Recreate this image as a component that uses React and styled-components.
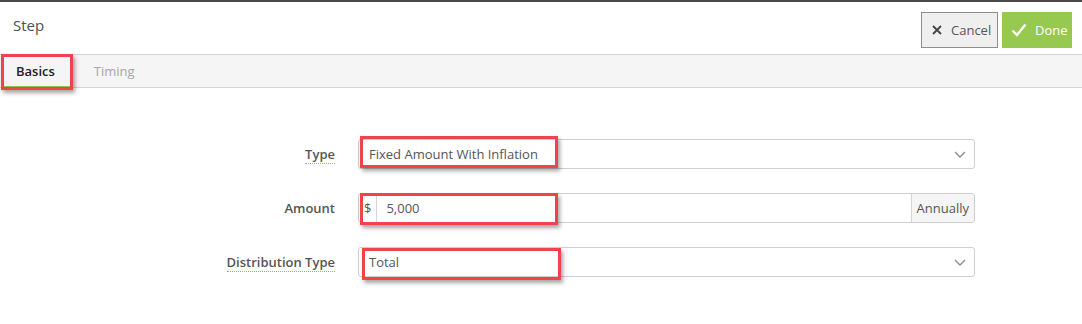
import React from "react";
import styled, { createGlobalStyle } from "styled-components";

const GlobalStyle = createGlobalStyle`
  body {
    margin: 0;
    background: #ffffff;
    font-family: "Open Sans", "Liberation Sans", sans-serif;
    color: #555;
  }
`;

const Page = styled.div`
  width: 1082px;
  height: 324px;
  border-top: 2px solid #4a4a4a;
  box-sizing: border-box;
  background: #fff;
`;

const Header = styled.div`
  height: 52px;
  display: flex;
  align-items: center;
  justify-content: space-between;
  padding: 0 10px 0 13px;
`;

const Title = styled.div`
  font-size: 15px;
  color: #4f4f4f;
  margin-top: -6px;
`;

const Actions = styled.div`
  display: flex;
  gap: 4px;
  margin-top: 4px;
`;

const Button = styled.button`
  height: 36px;
  display: flex;
  align-items: center;
  gap: ${(p) => (p.$primary ? 8 : 9)}px;
  font-family: inherit;
  font-size: 13px;
  padding: 0 0 0 ${(p) => (p.$primary ? 8 : 10)}px;
  box-sizing: border-box;
  cursor: pointer;
  border: 1px solid ${(p) => (p.$primary ? "#97c84f" : "#8e8e8e")};
  background: ${(p) => (p.$primary ? "#97c84f" : "#efefef")};
  color: ${(p) => (p.$primary ? "#fff" : "#555")};
  width: ${(p) => p.$w}px;
`;

const TabBar = styled.div`
  height: 32px;
  border-top: 1px solid #d4d4d4;
  border-bottom: 1px solid #d4d4d4;
  background: #f5f5f5;
  display: flex;
  gap: 8px;
  padding-left: 3px;
`;

const Tab = styled.div`
  position: relative;
  display: flex;
  align-items: center;
  padding: 0 18px 0 13px;
  font-size: 13px;
  font-weight: ${(p) => (p.$active ? 600 : 400)};
  color: ${(p) => (p.$active ? "#222" : "#a6a6a6")};
  border-bottom: 2px solid ${(p) => (p.$active ? "#8cc152" : "transparent")};
  margin-bottom: -1px;
`;

const Highlight = styled.div`
  position: absolute;
  border: 3px solid #f0444b;
  box-shadow: 2px 3px 4px rgba(0, 0, 0, 0.35);
  pointer-events: none;
  top: ${(p) => p.$t}px;
  left: ${(p) => p.$l}px;
  width: ${(p) => p.$w}px;
  height: ${(p) => p.$h}px;
  box-sizing: border-box;
`;

const Form = styled.div`
  display: flex;
  flex-direction: column;
  gap: 24px;
  padding-top: 51px;
`;

const Row = styled.div`
  display: grid;
  grid-template-columns: 335px 617px;
  column-gap: 23px;
  align-items: center;
  height: 30px;
`;

const Label = styled.div`
  justify-self: end;
  font-size: 13px;
  font-weight: 600;
  color: #555;
  line-height: 17px;
  border-bottom: 1px dotted ${(p) => (p.$hint ? "#8cc152" : "transparent")};
  margin-top: 2px;
`;

const Field = styled.div`
  position: relative;
  height: 30px;
  display: flex;
  border: 1px solid #cfcfcf;
  border-radius: 3px;
  box-sizing: border-box;
  background: #fff;
`;

const Value = styled.div`
  flex: 1;
  display: flex;
  align-items: center;
  padding: 0 ${(p) => p.$pl ?? 10}px;
  font-size: 13px;
  color: #555;
`;

const Addon = styled.div`
  display: flex;
  align-items: center;
  padding: 0 5px;
  font-size: 13px;
  color: #555;
  background: ${(p) => (p.$shaded ? "#f5f5f5" : "#fff")};
  border-left: ${(p) => (p.$side === "right" ? "1px solid #d4d4d4" : "none")};
  border-right: ${(p) => (p.$side === "left" ? "1px solid #d4d4d4" : "none")};
  border-radius: ${(p) => (p.$side === "right" ? "0 3px 3px 0" : "3px 0 0 3px")};
`;

const Caret = styled.div`
  display: flex;
  align-items: center;
  padding-right: 8px;
`;

const CloseIcon = () => (
  <svg width="10" height="10" viewBox="0 0 10 10">
    <path d="M1 1L9 9M9 1L1 9" stroke="#444" strokeWidth="1.8" fill="none" />
  </svg>
);

const CheckIcon = () => (
  <svg width="16" height="14" viewBox="0 0 16 14">
    <path
      d="M1.5 7.5L6 12L14.5 1.5"
      stroke="#fff"
      strokeWidth="2.4"
      fill="none"
    />
  </svg>
);

const ChevronIcon = () => (
  <svg width="12" height="7" viewBox="0 0 12 7">
    <path d="M1 1L6 6L11 1" stroke="#8a8a8a" strokeWidth="1.3" fill="none" />
  </svg>
);

export default function App() {
  return (
    <Page>
      <GlobalStyle />
      <Header>
        <Title>Step</Title>
        <Actions>
          <Button $w={77}>
            <CloseIcon />
            Cancel
          </Button>
          <Button $primary $w={70}>
            <CheckIcon />
            Done
          </Button>
        </Actions>
      </Header>
      <TabBar>
        <Tab $active>
          Basics
          <Highlight $t={-1} $l={-2} $w={72} $h={36} />
        </Tab>
        <Tab>Timing</Tab>
      </TabBar>
      <Form>
        <Row>
          <Label $hint>Type</Label>
          <Field>
            <Value>Fixed Amount With Inflation</Value>
            <Caret>
              <ChevronIcon />
            </Caret>
            <Highlight $t={-4} $l={1} $w={198} $h={32} />
          </Field>
        </Row>
        <Row>
          <Label>Amount</Label>
          <Field>
            <Addon $side="left">$</Addon>
            <Value $pl={9}>5,000</Value>
            <Addon $side="right" $shaded>Annually</Addon>
            <Highlight $t={-1} $l={1} $w={198} $h={32} />
          </Field>
        </Row>
        <Row>
          <Label $hint>Distribution Type</Label>
          <Field>
            <Value>Total</Value>
            <Caret>
              <ChevronIcon />
            </Caret>
            <Highlight $t={0} $l={3} $w={199} $h={32} />
          </Field>
        </Row>
      </Form>
    </Page>
  );
}
